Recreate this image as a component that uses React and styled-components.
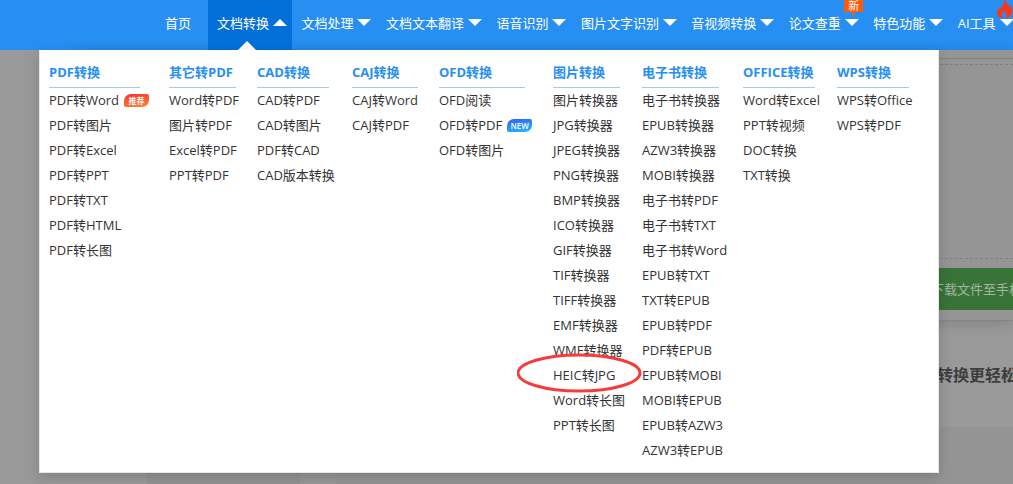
import React from "react";
import styled, { createGlobalStyle } from "styled-components";

const Global = createGlobalStyle`
  * { box-sizing: border-box; }
  body {
    margin: 0;
    overflow: hidden;
    background: #999;
    font-family: "Open Sans", "Noto Sans CJK SC", sans-serif;
    font-size: 13px;
    color: #333;
  }
  ul { list-style: none; margin: 0; padding: 0; }
  a { color: inherit; text-decoration: none; }
`;

const Page = styled.div`
  position: relative;
  min-height: 100vh;
  overflow: hidden;
`;

const Header = styled.header`
  height: 50px;
  padding-left: 156px;
  background: #278ff2;
  color: #fff;
`;

const NavList = styled.ul`
  display: flex;
  height: 100%;
  margin-right: -6px;
`;

const NavItem = styled.li`
  position: relative;
  flex: ${(p) => (p.$plain ? "0 0 52px" : "1 0 auto")};
  background: ${(p) => (p.$active ? "#036fd8" : "transparent")};
`;

const NavLink = styled.a`
  display: flex;
  align-items: center;
  gap: 4px;
  height: 44px;
  padding: 0 5px 0 9px;
  white-space: nowrap;
`;

const Caret = styled.span`
  width: 0;
  border: solid transparent;
  border-width: ${(p) => (p.$up ? "0 7px 7px" : "7px 7px 0")};
  border-${(p) => (p.$up ? "bottom" : "top")}-color: #fff;
`;

const Pointer = styled.span`
  position: absolute;
  bottom: 0;
  left: 50%;
  margin-left: -12px;
  border: solid transparent;
  border-width: 0 9px 9px;
  border-bottom-color: #fff;
`;

const FreshTag = styled.span`
  position: absolute;
  top: 0;
  right: 1px;
  width: 19px;
  height: 12px;
  background: #ff5a0a;
  font-size: 11px;
  line-height: 12px;
  text-align: center;
  &::after {
    content: "";
    position: absolute;
    left: 8px;
    top: 12px;
    border: solid transparent;
    border-width: 4px 4px 0 0;
    border-top-color: #ff5a0a;
  }
`;

const Flame = styled.svg`
  position: absolute;
  top: 0;
  right: 6px;
`;

const Menu = styled.nav`
  position: absolute;
  z-index: 2;
  top: 50px;
  left: 39px;
  right: 74px;
  display: grid;
  grid-template-columns: 120fr 88fr 95fr 87fr 114fr 89fr 101fr 94fr 92fr;
  padding: 9px;
  border: 1px solid #e6e6e6;
  border-top: 0;
  background: #fff;
  box-shadow: 0 4px 12px rgba(0, 0, 0, 0.16);
`;

const Column = styled.section`
  min-width: 0;
  white-space: nowrap;
`;

const Title = styled.h2`
  width: ${(p) => p.$rule}px;
  height: 29px;
  margin: 0;
  border-bottom: 1px solid #a3c8f3;
  color: #278ff2;
  font-size: 13px;
  font-weight: 700;
  line-height: 26px;
`;

const Entry = styled.li`
  display: flex;
  align-items: center;
  gap: 5px;
  height: 25px;
`;

const EntryLink = styled.a`
  padding-bottom: 2px;
`;

const Badge = styled.span`
  width: 25px;
  height: 13px;
  border-radius: 7px 2px;
  background: ${(p) =>
    p.$blue
      ? "linear-gradient(170deg, #2f62f5, #25bcff)"
      : "linear-gradient(170deg, #fb2f31, #ff8a26)"};
  color: #fff;
  font-size: 8px;
  font-weight: 600;
  line-height: 13px;
  text-align: center;
`;

const Ring = styled.svg`
  position: absolute;
  z-index: 3;
  top: 353px;
  left: 517px;
`;

const Backdrop = styled.main`
  display: flex;
  flex-direction: column;
  color: #3d3d3d;
`;

const UploadCard = styled.section`
  height: 271px;
  margin: 0 0 0 74px;
  padding-top: 8px;
  border-bottom: 1px solid #858585;
  background: #959595;
  box-shadow: 0 2px 12px rgba(0, 0, 0, 0.15);
`;

const DropZone = styled.div`
  border-top: 1px solid #838383;
  padding-top: 5px;
`;

const DropArea = styled.div`
  height: 195px;
  border: 1px dashed #808080;
  border-width: 1px 0;
`;

const PhoneButton = styled.button`
  display: block;
  width: 180px;
  height: 42px;
  margin: 9px -98px 0 auto;
  padding: 0;
  border: 0;
  background: #387338;
  color: #a3b5a3;
  font: inherit;
  line-height: 40px;
  text-align: left;
  white-space: nowrap;
`;

const Slogan = styled.h1`
  height: 106px;
  margin: 0 -4px 0 0;
  font-size: 16px;
  font-weight: 700;
  line-height: 108px;
  text-align: right;
`;

const Features = styled.section`
  display: grid;
  grid-template-columns: 147fr 153fr 36fr 677fr;
  min-height: 57px;
`;

const FeatureBlock = styled.div`
  background: ${(p) => p.$tone};
`;

const NAV = [
  { label: "首页", plain: true },
  { label: "文档转换", active: true },
  { label: "文档处理" },
  { label: "文档文本翻译" },
  { label: "语音识别" },
  { label: "图片文字识别" },
  { label: "音视频转换" },
  { label: "论文查重", fresh: true },
  { label: "特色功能" },
  { label: "AI工具", hot: true },
];

const COLUMNS = [
  { title: "PDF转换", rule: 91, items: ["PDF转Word", "PDF转图片", "PDF转Excel", "PDF转PPT", "PDF转TXT", "PDF转HTML", "PDF转长图"] },
  { title: "其它转PDF", rule: 67, items: ["Word转PDF", "图片转PDF", "Excel转PDF", "PPT转PDF"] },
  { title: "CAD转换", rule: 72, items: ["CAD转PDF", "CAD转图片", "PDF转CAD", "CAD版本转换"] },
  { title: "CAJ转换", rule: 66, items: ["CAJ转Word", "CAJ转PDF"] },
  { title: "OFD转换", rule: 86, items: ["OFD阅读", "OFD转PDF", "OFD转图片"] },
  { title: "图片转换", rule: 67, items: ["图片转换器", "JPG转换器", "JPEG转换器", "PNG转换器", "BMP转换器", "ICO转换器", "GIF转换器", "TIF转换器", "TIFF转换器", "EMF转换器", "WMF转换器", "HEIC转JPG", "Word转长图", "PPT转长图"] },
  { title: "电子书转换", rule: 77, items: ["电子书转换器", "EPUB转换器", "AZW3转换器", "MOBI转换器", "电子书转PDF", "电子书转TXT", "电子书转Word", "EPUB转TXT", "TXT转EPUB", "EPUB转PDF", "PDF转EPUB", "EPUB转MOBI", "MOBI转EPUB", "EPUB转AZW3", "AZW3转EPUB"] },
  { title: "OFFICE转换", rule: 72, items: ["Word转Excel", "PPT转视频", "DOC转换", "TXT转换"] },
  { title: "WPS转换", rule: 72, items: ["WPS转Office", "WPS转PDF"] },
];

const BADGES = {
  "PDF转Word": { text: "推荐" },
  "OFD转PDF": { text: "NEW", blue: true },
};

const FEATURE_TONES = ["#999999", "#929292", "#979797", "#949494"];

export default function App() {
  return (
    <Page>
      <Global />
      <Header>
        <NavList>
          {NAV.map((n) => (
            <NavItem key={n.label} $plain={n.plain} $active={n.active}>
              <NavLink href="#">
                {n.label}
                {!n.plain && <Caret $up={n.active} />}
              </NavLink>
              {n.active && <Pointer />}
              {n.fresh && <FreshTag>新</FreshTag>}
              {n.hot && (
                <Flame width="17" height="18" viewBox="0 0 17 18" aria-hidden="true">
                  <path d="M8 0c3 2 4 4 4 7l2-2c2 3 3 5 2 8-1 3-4 5-7 5 2-2 2-4-1-7-2 3-3 5-1 7-4 0-6-2-6-5 0-2 1-4 3-6l1 2c1-3 3-5 3-9z" fill="#f8361c" />
                </Flame>
              )}
            </NavItem>
          ))}
        </NavList>
      </Header>
      <Menu>
        {COLUMNS.map((c) => (
          <Column key={c.title}>
            <Title $rule={c.rule}>{c.title}</Title>
            <ul>
              {c.items.map((t) => (
                <Entry key={t}>
                  <EntryLink href="#">{t}</EntryLink>
                  {BADGES[t] && <Badge $blue={BADGES[t].blue}>{BADGES[t].text}</Badge>}
                </Entry>
              ))}
            </ul>
          </Column>
        ))}
      </Menu>
      <Ring width="125" height="40" viewBox="0 0 125 40" aria-hidden="true">
        <ellipse cx="62" cy="20" rx="61" ry="18" fill="none" stroke="#f53b3b" strokeWidth="3" />
      </Ring>
      <Backdrop>
        <UploadCard>
          <DropZone><DropArea /></DropZone>
          <PhoneButton>下载文件至手机</PhoneButton>
        </UploadCard>
        <Slogan>转换更轻松</Slogan>
        <Features>
          {FEATURE_TONES.map((tone) => (
            <FeatureBlock key={tone} $tone={tone} />
          ))}
        </Features>
      </Backdrop>
    </Page>
  );
}
